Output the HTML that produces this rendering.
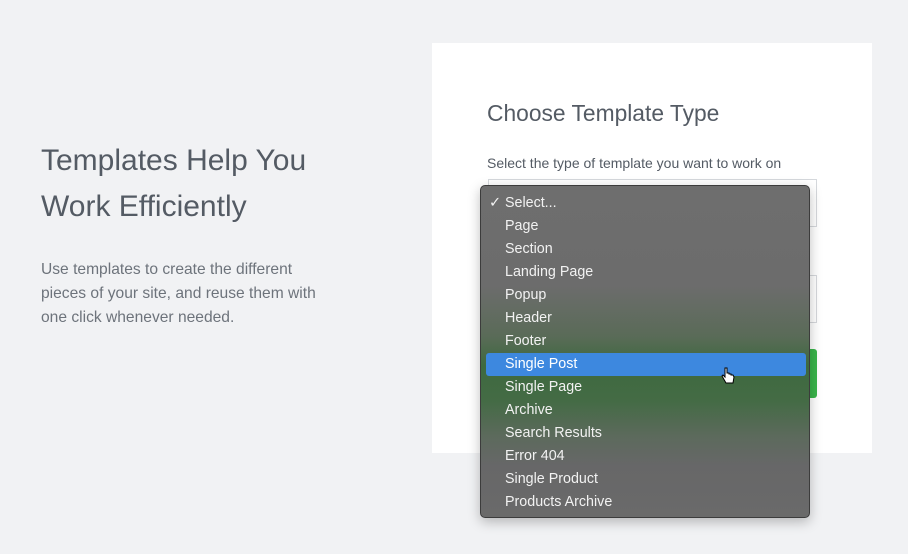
<!DOCTYPE html>
<html><head><style>
body{margin:0;width:908px;height:554px;background:#f1f2f4;font-family:"Liberation Sans",sans-serif;position:relative;overflow:hidden}
.h{position:absolute;left:41px;top:138px;font-size:30px;line-height:46px;color:#545b64}
.p{position:absolute;left:41px;top:258px;font-size:15.6px;line-height:24px;color:#6d737b}
.card{position:absolute;left:432px;top:43px;width:440px;height:410px;background:#fff}
.t{position:absolute;left:487px;top:100px;font-size:22.8px;color:#545b64}
.s{position:absolute;left:487px;top:155px;font-size:14px;color:#545b64}
.in{position:absolute;left:488px;width:329px;height:48px;border:1px solid #d5d8dc;box-sizing:border-box;background:#fff}
.btn{position:absolute;left:488px;top:349px;width:329px;height:49px;background:#39b54a;border-radius:3px}
.dd{position:absolute;left:480px;top:185px;width:330px;height:333px;border-radius:5px;border:1px solid #3c3c3c;box-sizing:border-box;
background:linear-gradient(#6e6e6e 0px,#6c6c6c 100px,#5a6b58 150px,#3e6a3f 180px,#446b45 215px,#5c6a5c 250px,#676768 280px,#6a6a6a 333px);box-shadow:0 4px 12px rgba(0,0,0,.25)}
.it{position:absolute;left:24px;font-size:14.3px;color:#f2f2f2;height:23px;line-height:23px}
.sel{position:absolute;left:5px;top:167px;width:320px;height:23px;background:#3d88df;border-radius:3px}
</style></head><body>
<div class="h">Templates Help You<br>Work Efficiently</div>
<div class="p">Use templates to create the different<br>pieces of your site, and reuse them with<br>one click whenever needed.</div>
<div class="card"></div>
<div class="t">Choose Template Type</div>
<div class="s">Select the type of template you want to work on</div>
<div class="in" style="top:179px"></div>
<div class="in" style="top:275px"></div>
<div class="btn"></div>
<div class="dd">
<div class="sel"></div>
<div class="it" style="top:6px;left:8px">✓ Select...</div>
<div class="it" style="top:29px">Page</div>
<div class="it" style="top:52px">Section</div>
<div class="it" style="top:75px">Landing Page</div>
<div class="it" style="top:98px">Popup</div>
<div class="it" style="top:121px">Header</div>
<div class="it" style="top:144px">Footer</div>
<div class="it" style="top:167px;color:#fff">Single Post</div>
<div class="it" style="top:190px">Single Page</div>
<div class="it" style="top:213px">Archive</div>
<div class="it" style="top:236px">Search Results</div>
<div class="it" style="top:259px">Error 404</div>
<div class="it" style="top:282px">Single Product</div>
<div class="it" style="top:305px">Products Archive</div>
<svg style="position:absolute;left:240px;top:181px" width="14" height="18" viewBox="0 0 14 18"><path d="M4 1v9l-2-2-1 1 4 7h7l1-6-1-2-2 0v-1h-2v-1h-2V1z" fill="#fff" stroke="#000" stroke-width="1"/></svg>
</div>
</body></html>
